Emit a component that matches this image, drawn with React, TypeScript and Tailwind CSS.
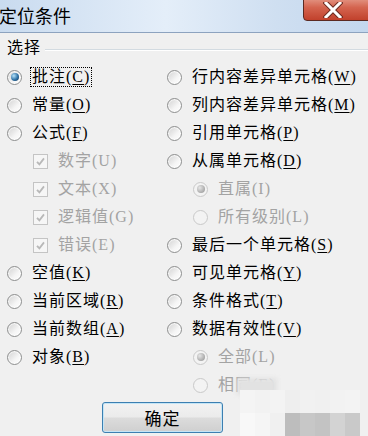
import React from 'react';

type Item = {
  label: string;
  key?: string;
  kind: 'radio' | 'check';
  indent?: boolean;
  checked?: boolean;
  disabled?: boolean;
  focus?: boolean;
};

const rows: [Item | null, Item | null][] = [
  [
    { label: '批注', key: 'C', kind: 'radio', checked: true, focus: true },
    { label: '行内容差异单元格', key: 'W', kind: 'radio' },
  ],
  [
    { label: '常量', key: 'O', kind: 'radio' },
    { label: '列内容差异单元格', key: 'M', kind: 'radio' },
  ],
  [
    { label: '公式', key: 'F', kind: 'radio' },
    { label: '引用单元格', key: 'P', kind: 'radio' },
  ],
  [
    { label: '数字', key: 'U', kind: 'check', indent: true, checked: true, disabled: true },
    { label: '从属单元格', key: 'D', kind: 'radio' },
  ],
  [
    { label: '文本', key: 'X', kind: 'check', indent: true, checked: true, disabled: true },
    { label: '直属', key: 'I', kind: 'radio', indent: true, checked: true, disabled: true },
  ],
  [
    { label: '逻辑值', key: 'G', kind: 'check', indent: true, checked: true, disabled: true },
    { label: '所有级别', key: 'L', kind: 'radio', indent: true, disabled: true },
  ],
  [
    { label: '错误', key: 'E', kind: 'check', indent: true, checked: true, disabled: true },
    { label: '最后一个单元格', key: 'S', kind: 'radio' },
  ],
  [
    { label: '空值', key: 'K', kind: 'radio' },
    { label: '可见单元格', key: 'Y', kind: 'radio' },
  ],
  [
    { label: '当前区域', key: 'R', kind: 'radio' },
    { label: '条件格式', key: 'T', kind: 'radio' },
  ],
  [
    { label: '当前数组', key: 'A', kind: 'radio' },
    { label: '数据有效性', key: 'V', kind: 'radio' },
  ],
  [
    { label: '对象', key: 'B', kind: 'radio' },
    { label: '全部', key: 'L', kind: 'radio', indent: true, checked: true, disabled: true },
  ],
  [
    null,
    { label: '相同', key: 'E', kind: 'radio', indent: true, disabled: true },
  ],
];

const Radio = ({ checked, disabled }: { checked?: boolean; disabled?: boolean }) => (
  <span
    className={`w-[15px] h-[15px] rounded-full border flex items-center justify-center shrink-0 ${
      disabled
        ? 'border-[#c9c9c9] bg-[#f3f3f3]'
        : 'border-[#8e8f8f] bg-[linear-gradient(135deg,#d0d0d0,#f5f5f5_60%,#ffffff)] shadow-[inset_0_0_1px_1px_rgba(255,255,255,0.8)]'
    }`}
  >
    {checked && (
      <span
        className={`w-[8px] h-[8px] rounded-full ${
          disabled
            ? 'bg-[radial-gradient(circle_at_35%_35%,#e6e6e6,#a9a9a9_70%)]'
            : 'bg-[radial-gradient(circle_at_35%_35%,#b6e3fb,#2f72a6_55%,#0d2c4e)]'
        }`}
      />
    )}
  </span>
);

const Check = ({ checked }: { checked?: boolean }) => (
  <span className="w-[15px] h-[15px] border border-[#c4c4c4] bg-[#f6f6f6] flex items-center justify-center shrink-0">
    {checked && (
      <svg width="11" height="11" viewBox="0 0 11 11">
        <path d="M2 5.8 L4.4 8.4 L9 2.4" fill="none" stroke="#b8b8b8" strokeWidth="1.8" />
      </svg>
    )}
  </span>
);

const Cell = ({ item }: { item: Item | null }) => {
  if (!item) return <div />;
  const color = item.disabled ? 'text-[#a3a3a3]' : 'text-black';
  return (
    <div className={`flex items-center ${item.indent ? 'pl-[26px]' : ''}`}>
      {item.kind === 'radio' ? (
        <Radio checked={item.checked} disabled={item.disabled} />
      ) : (
        <Check checked={item.checked} />
      )}
      <span
        className={`ml-[9px] px-[1px] leading-[18px] tracking-[1px] whitespace-nowrap ${color} ${
          item.focus ? 'outline outline-1 outline-dotted outline-black' : ''
        }`}
      >
        {item.label}(
        <span className={item.disabled ? '' : 'underline underline-offset-2'}>{item.key}</span>)
      </span>
    </div>
  );
};

export default function App() {
  return (
    <div
      className="relative w-[368px] h-[436px] overflow-hidden bg-[#f0f0f0] text-[16px]"
      style={{ fontFamily: '"Liberation Serif", "Noto Sans CJK SC", serif' }}
    >
      {/* title bar */}
      <div className="relative h-[33px] border-b border-[#8da3bf] bg-[linear-gradient(90deg,#c9dbef,#e4eef9_45%,#cfdff1_75%,#c3d7ee)]">
        <div className="absolute left-[-1px] top-[4px] text-[18px] leading-[22px] text-black" style={{ fontFamily: '"Noto Sans CJK SC", sans-serif' }}>
          定位条件
        </div>
        <div className="absolute left-[303px] top-[-6px] w-[72px] h-[27px] rounded-[4px] border border-[#5b2a22] bg-[linear-gradient(180deg,#e9a999,#d4644f_50%,#c1412c)] flex items-center justify-center pt-[4px] pr-[12px]">
          <svg width="20" height="16" viewBox="0 0 20 16">
            <path d="M3 1 L17 15 M17 1 L3 15" stroke="#6b2a20" strokeWidth="5" strokeLinecap="square" />
            <path d="M3 1 L17 15 M17 1 L3 15" stroke="#ffffff" strokeWidth="3" strokeLinecap="square" />
          </svg>
        </div>
      </div>

      {/* group legend */}
      <div className="h-[30px] flex items-center pl-[7px]">
        <span className="leading-[18px] tracking-[1px]">选择</span>
        <div className="flex-1 ml-[4px] mt-[4px] border-t border-[#d3dbe1] border-b-white border-b" />
      </div>

      {/* options */}
      <div className="pl-[7px]">
        {rows.map((r, i) => (
          <div key={i} className="grid grid-cols-[160px_1fr] h-[28px]">
            <Cell item={r[0]} />
            <Cell item={r[1]} />
          </div>
        ))}
      </div>

      {/* button */}
      <div className="pl-[102px] mt-[3px]">
        <button className="w-[121px] h-[31px] rounded-[3px] border border-[#3c7fb1] bg-[linear-gradient(180deg,#f2f2f2,#ebebeb_48%,#dcdcdc_52%,#cfcfcf)] shadow-[inset_0_0_0_1px_#c4e5f6] text-[17px] tracking-[1px] text-black" style={{ fontFamily: '"Noto Sans CJK SC", sans-serif' }}>
          确定
        </button>
      </div>

      {/* mosaic blur overlay */}
      <div className="absolute left-[237px] top-[378px] w-[40px] h-[17px] bg-[#e2e2e2] blur-[2px]" />
      <div className="absolute left-[240px] top-[390px] w-[120px] h-[46px] grid grid-cols-8 grid-rows-2">
        <div className="bg-[#f4f4f4]" />
        <div className="bg-[#f2f2f2]" />
        <div className="bg-[#f3f3f3]" />
        <div className="bg-[#eeeeee]" />
        <div className="bg-[#f1f1f1]" />
        <div className="bg-[#f0f0f0]" />
        <div className="bg-[#f2f2f2]" />
        <div className="bg-[#f3f3f3]" />
        <div className="bg-[#f8f8f8]" />
        <div className="bg-[#f5f5f5]" />
        <div className="bg-[#f0f0f0]" />
        <div className="bg-[#bdbdbd]" />
        <div className="bg-[#c7c7c7]" />
        <div className="bg-[#c3c3c3]" />
        <div className="bg-[#d3d3d3]" />
        <div className="bg-[#c9c9c9]" />
      </div>
    </div>
  );
}
